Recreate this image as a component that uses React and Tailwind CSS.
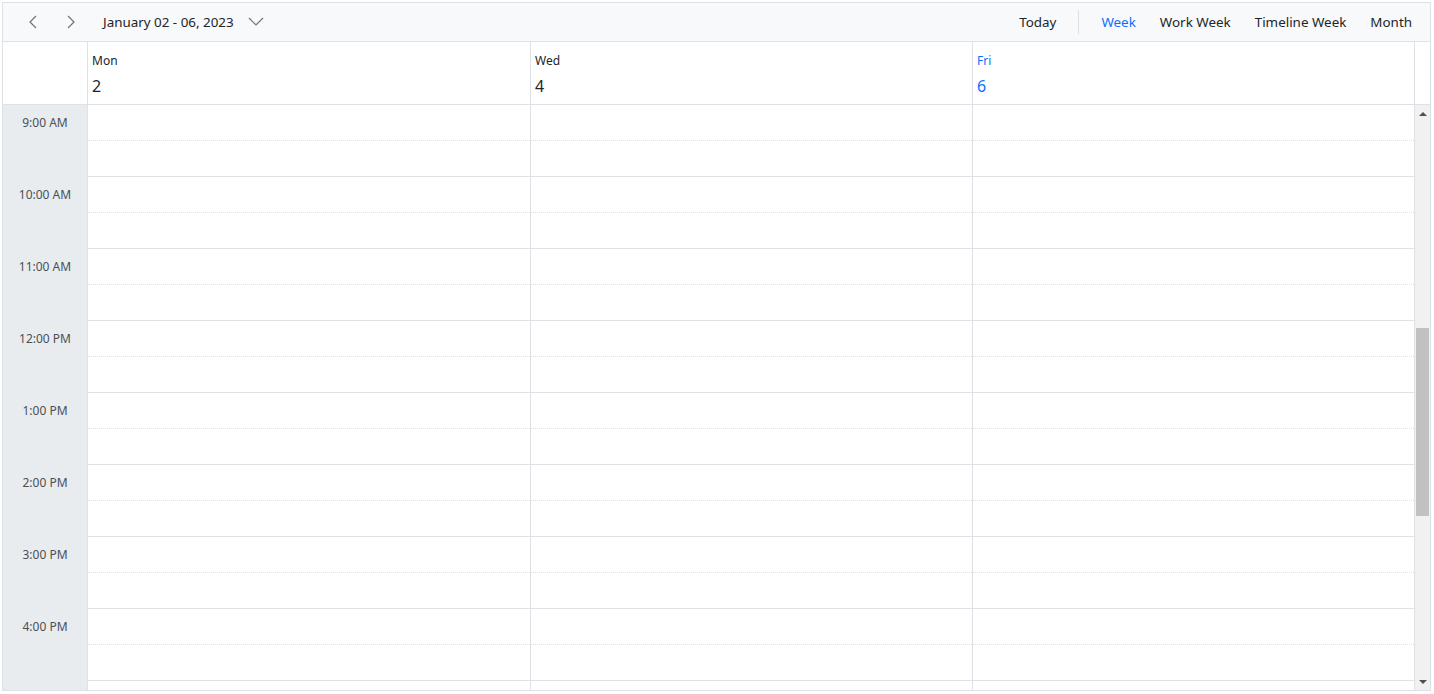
import React from "react";

const hours = ["9:00 AM", "10:00 AM", "11:00 AM", "12:00 PM", "1:00 PM", "2:00 PM", "3:00 PM", "4:00 PM"];
const slots = [...hours, "5:00 PM"];
const days = [
  { name: "Mon", date: "2", w: "w-[443px]" },
  { name: "Wed", date: "4", w: "w-[442px]" },
  { name: "Fri", date: "6", w: "w-[442px]", today: true },
];

const Chevron = ({ dir }) => {
  const pts = { left: "9,2 3,8 9,14", right: "3,2 9,8 3,14", down: "1,4 8,11 15,4" };
  return (
    <svg width={dir === "down" ? 16 : 12} height="16" viewBox={dir === "down" ? "0 0 16 16" : "0 0 12 16"} fill="none" stroke="#6c757d" strokeWidth="1.2">
      <polyline points={pts[dir]} />
    </svg>
  );
};

const App = () => {
  return (
    <div className="w-[1434px] h-[694px] bg-white pl-[2px] pt-[2px]" style={{ fontFamily: '"Noto Sans", "Open Sans", sans-serif' }}>
      <div className="w-[1429px] h-[689px] border border-[#dee2e6] flex flex-col overflow-hidden">
        {/* Toolbar */}
        <div className="h-[39px] shrink-0 bg-[#f8f9fa] border-b border-[#dee2e6] flex items-center text-[13.4px] text-[#212529]">
          <div className="w-[24px]" />
          <button className="w-[14px] h-[16px] flex items-center"><Chevron dir="left" /></button>
          <div className="w-[24px]" />
          <button className="w-[14px] h-[16px] flex items-center"><Chevron dir="right" /></button>
          <span className="ml-[24px]">January 02 - 06, 2023</span>
          <span className="ml-[14px] flex items-center"><Chevron dir="down" /></span>
          <div className="flex-1" />
          <span>Today</span>
          <div className="w-px h-[24px] bg-[#dee2e6] mx-[22px]" />
          <span className="text-[#0d6efd]">Week</span>
          <span className="ml-[24px]">Work Week</span>
          <span className="ml-[24px]">Timeline Week</span>
          <span className="ml-[24px] mr-[18px]">Month</span>
        </div>

        {/* Header */}
        <div className="h-[63px] shrink-0 border-b border-[#dee2e6] flex">
          <div className="w-[85px] shrink-0 border-r border-[#dee2e6]" />
          {days.map((d) => (
            <div key={d.name} className={`${d.w} shrink-0 border-r border-[#dee2e6] pl-[4px] pt-[11px] ${d.today ? "text-[#0d6efd]" : "text-[#212529]"}`}>
              <div className="text-[12px] leading-[16px]">{d.name}</div>
              <div className="text-[16px] leading-[20px] mt-[7px]">{d.date}</div>
            </div>
          ))}
          <div className="w-[15px] shrink-0" />
        </div>

        {/* Body */}
        <div className="flex-1 flex overflow-hidden">
          <div className="w-[85px] shrink-0 bg-[#e9ecef] border-r border-[#dee2e6]">
            {hours.map((h) => (
              <div key={h} className="h-[72px] text-[12px] text-[#495057] text-center pt-[9px]">{h}</div>
            ))}
          </div>
          {days.map((d) => (
            <div key={d.name} className={`${d.w} shrink-0 border-r border-[#dee2e6]`}>
              {slots.map((h) => (
                <div key={h}>
                  <div className="h-[36px] border-b border-dotted border-[#dee2e6]" />
                  <div className="h-[36px] border-b border-[#dee2e6]" />
                </div>
              ))}
            </div>
          ))}
          {/* scrollbar */}
          <div className="w-[15px] shrink-0 bg-[#f1f1f1] flex flex-col items-center">
            <div className="h-[17px] flex items-center justify-center">
              <div className="w-0 h-0 border-l-[4px] border-r-[4px] border-b-[4px] border-l-transparent border-r-transparent border-b-[#505050]" />
            </div>
            <div className="flex-1 w-full px-[1px]">
              <div className="mt-[206px] h-[188px] bg-[#c1c1c1] w-full" />
            </div>
            <div className="h-[17px] flex items-center justify-center">
              <div className="w-0 h-0 border-l-[4px] border-r-[4px] border-t-[4px] border-l-transparent border-r-transparent border-t-[#505050]" />
            </div>
          </div>
        </div>
      </div>
    </div>
  );
};

export default App;
